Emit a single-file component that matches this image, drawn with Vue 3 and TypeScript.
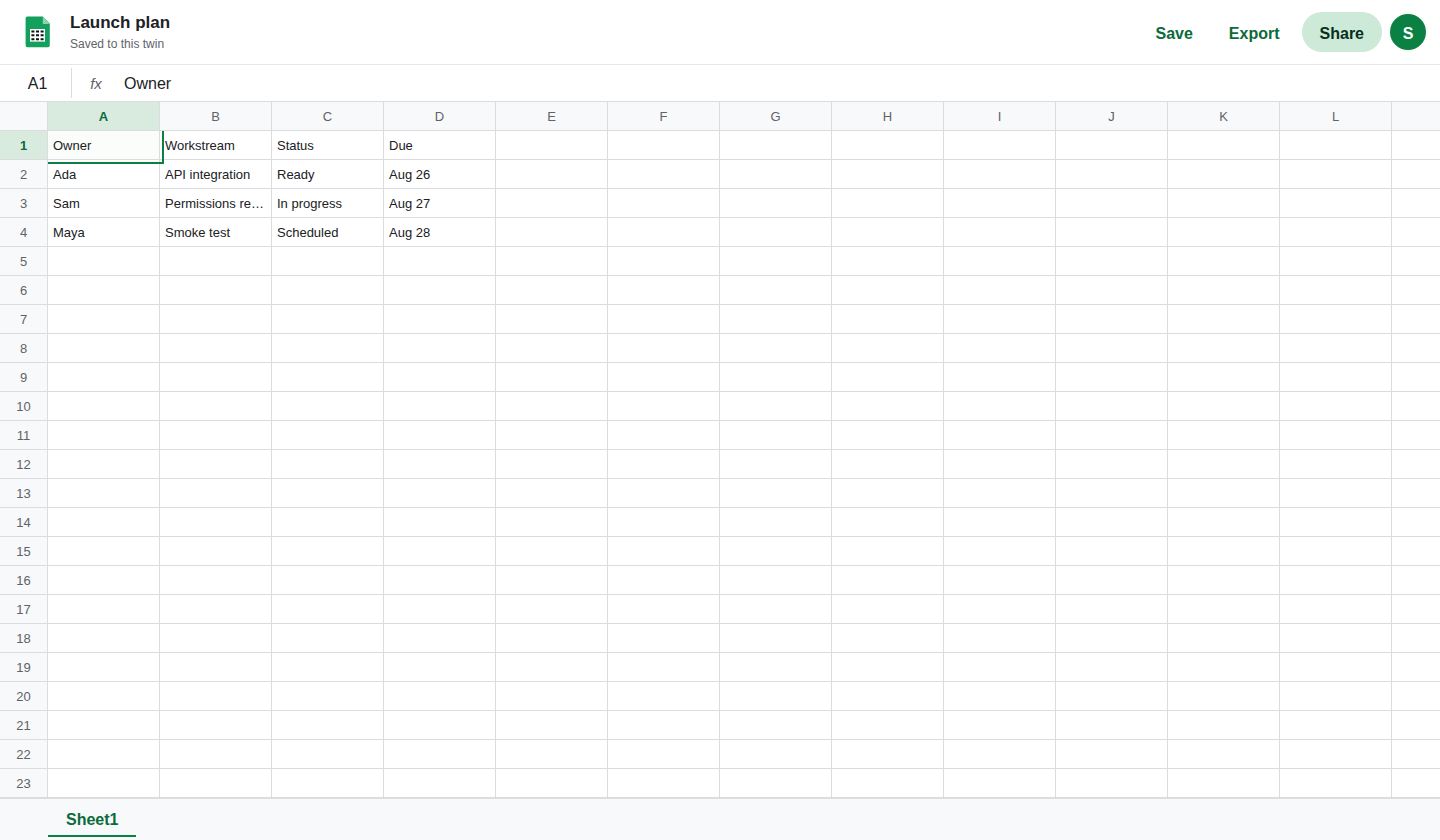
<script setup lang="ts">
import { computed, onBeforeUnmount, onMounted, ref } from 'vue'

const rowHeight = 29
const columnWidth = 112
const rowHeaderWidth = 48
const chromeHeight = 173

const viewport = ref({ width: window.innerWidth, height: window.innerHeight })

function measure() {
  viewport.value = { width: window.innerWidth, height: window.innerHeight }
}

onMounted(() => window.addEventListener('resize', measure))
onBeforeUnmount(() => window.removeEventListener('resize', measure))

// Enough columns and rows to fill the window, never fewer than the data needs.
const columns = computed<string[]>(() => {
  const fit = Math.ceil((viewport.value.width - rowHeaderWidth) / columnWidth)
  return 'ABCDEFGHIJKLMNOPQRSTUVWXYZ'.slice(0, Math.max(4, fit)).split('')
})

const rowCount = computed(() =>
  Math.max(4, Math.ceil((viewport.value.height - chromeHeight) / rowHeight)),
)

const data = ref<string[][]>([
  ['Owner', 'Workstream', 'Status', 'Due'],
  ['Ada', 'API integration', 'Ready', 'Aug 26'],
  ['Sam', 'Permissions review', 'In progress', 'Aug 27'],
  ['Maya', 'Smoke test', 'Scheduled', 'Aug 28'],
])

const selected = ref({ row: 0, col: 0 })

const cellName = computed(() => String.fromCharCode(65 + selected.value.col) + (selected.value.row + 1))

const formula = computed({
  get: () => valueAt(selected.value.row, selected.value.col),
  set: (text: string) => {
    const { row, col } = selected.value
    while (data.value.length <= row) data.value.push([])
    data.value[row][col] = text
  },
})

function valueAt(row: number, col: number): string {
  return data.value[row]?.[col] ?? ''
}

function isSelected(row: number, col: number): boolean {
  return selected.value.row === row && selected.value.col === col
}
</script>

<template>
  <div class="app">
    <header class="topbar">
      <svg class="logo" viewBox="0 0 26 32" aria-hidden="true">
        <path d="M2 .6H17.800L24.800 7.600V29.400A1.800 1.800 0 0 1 23 31.200H2.400A1.800 1.800 0 0 1 .6 29.400V2.400A1.800 1.800 0 0 1 2.400 .6Z" fill="#12a05c" />
        <path d="M17.800 .6L24.800 7.900H17.800Z" fill="#8fd3b0" />
        <path d="M5 13H20V25.600H5Z" fill="#fff" />
        <path d="M6.400 14.400h3v2h-3zM11 14.400h3v2h-3zM15.600 14.400h3v2h-3zM6.400 18.300h3v2h-3zM11 18.300h3v2h-3zM15.600 18.300h3v2h-3zM6.400 22.200h3v2h-3zM11 22.200h3v2h-3zM15.600 22.200h3v2h-3z" fill="#111" />
      </svg>
      <div class="heading">
        <h1>Launch plan</h1>
        <p>Saved to this twin</p>
      </div>
      <div class="actions">
        <button type="button">Save</button>
        <button type="button">Export</button>
        <button type="button" class="share">Share</button>
        <button type="button" class="avatar" aria-label="Account S">S</button>
      </div>
    </header>

    <div class="formula-bar">
      <input class="name-box" :value="cellName" aria-label="Selected cell" readonly />
      <label class="fx" for="formula">fx</label>
      <input id="formula" v-model="formula" class="formula" type="text" />
    </div>

    <main class="grid">
      <table>
        <thead>
          <tr>
            <th class="corner"></th>
            <th v-for="(name, c) in columns" :key="name" scope="col" :class="{ active: selected.col === c }">{{ name }}</th>
          </tr>
        </thead>
        <tbody>
          <tr v-for="n in rowCount" :key="n">
            <th scope="row" :class="{ active: selected.row === n - 1 }">{{ n }}</th>
            <td
              v-for="(name, c) in columns"
              :key="name"
              :class="{ selected: isSelected(n - 1, c) }"
              @click="selected = { row: n - 1, col: c }"
            >
              <div class="text">{{ valueAt(n - 1, c) }}</div>
            </td>
          </tr>
        </tbody>
      </table>
    </main>

    <footer class="tabs">
      <button type="button" class="tab">Sheet1</button>
    </footer>
  </div>
</template>

<style>
body {
  margin: 0;
}
</style>

<style scoped>
.app {
  display: flex;
  flex-direction: column;
  height: 100vh;
  background: #fff;
  color: #202124;
  font-family: "Liberation Sans", Arial, sans-serif;
}

button,
input {
  border: 0;
  padding: 0;
  background: none;
  color: inherit;
  font: inherit;
  outline: 0;
}

.topbar {
  display: flex;
  flex: none;
  align-items: center;
  box-sizing: border-box;
  height: 65px;
  padding: 0 14px 0 25px;
  border-bottom: 1px solid #e4e6ea;
}

.logo {
  width: 26px;
  height: 32px;
}

.heading {
  flex: 1;
  margin-left: 19px;
}

h1 {
  margin: 0;
  font-size: 17px;
  font-weight: 700;
  line-height: 24px;
}

p {
  margin: 0;
  color: #5f6368;
  font-size: 12px;
  line-height: 18px;
}

.actions {
  display: flex;
  align-items: center;
}

.actions button {
  height: 40px;
  padding: 3px 18px 0;
  border-radius: 20px;
  color: #0b6b3a;
  font-size: 16px;
  font-weight: 700;
}

.actions .share {
  margin-left: 4px;
  background: #cde9d7;
  color: #07301b;
}

.actions .avatar {
  width: 36px;
  height: 36px;
  margin-left: 8px;
  padding: 3px 0 0;
  background: #0b8043;
  color: #fff;
}

.formula-bar {
  display: flex;
  flex: none;
  align-items: center;
  height: 36px;
  border-bottom: 1px solid #dadce0;
  font-size: 16px;
}

.name-box {
  box-sizing: border-box;
  width: 72px;
  height: 30px;
  padding: 2px 0 0 4px;
  border-right: 1px solid #dadce0;
  text-align: center;
}

.fx {
  width: 48px;
  color: #5f6368;
  font-size: 15px;
  font-style: italic;
  text-align: center;
}

.formula {
  box-sizing: border-box;
  flex: 1;
  min-width: 0;
  height: 30px;
  padding: 2px 4px 0;
}

.grid {
  flex: 1;
  min-height: 0;
  overflow: auto;
  scrollbar-width: none;
}

table {
  width: max-content;
  border-collapse: separate;
  border-spacing: 0;
  table-layout: fixed;
  font-size: 13px;
}

th,
td {
  box-sizing: border-box;
  width: 112px;
  min-width: 112px;
  height: 29px;
  padding: 0;
  border-right: 1px solid #dadce0;
  border-bottom: 1px solid #dadce0;
}

th {
  background: #f8f9fb;
  color: #5f6368;
  font-weight: 400;
}

th.active {
  background: #d9eadf;
  color: #0b6b3a;
  font-weight: 700;
}

thead th {
  position: sticky;
  top: 0;
  z-index: 2;
}

thead .corner,
tbody th {
  position: sticky;
  left: 0;
  z-index: 2;
  width: 48px;
  min-width: 48px;
}

thead .corner {
  z-index: 3;
}

td {
  position: relative;
}

.text {
  height: 26px;
  width: 101px;
  padding: 2px 5px 0;
  overflow: hidden;
  line-height: 26px;
  text-overflow: ellipsis;
  white-space: nowrap;
}

.selected {
  background: #fbfdfb;
}

.selected::after {
  position: absolute;
  z-index: 1;
  inset: -2px -5px -5px -2px;
  border: 2px solid #0b8043;
  content: "";
  pointer-events: none;
}

.tabs {
  display: flex;
  flex: none;
  height: 41px;
  padding-left: 48px;
  border-top: 1px solid #dadce0;
  background: #f8f9fb;
}

.tab {
  box-sizing: border-box;
  height: 38px;
  padding: 6px 18px 0;
  border-bottom: 2px solid #0b8043;
  color: #0b6b3a;
  font-size: 16px;
  font-weight: 700;
}
</style>
